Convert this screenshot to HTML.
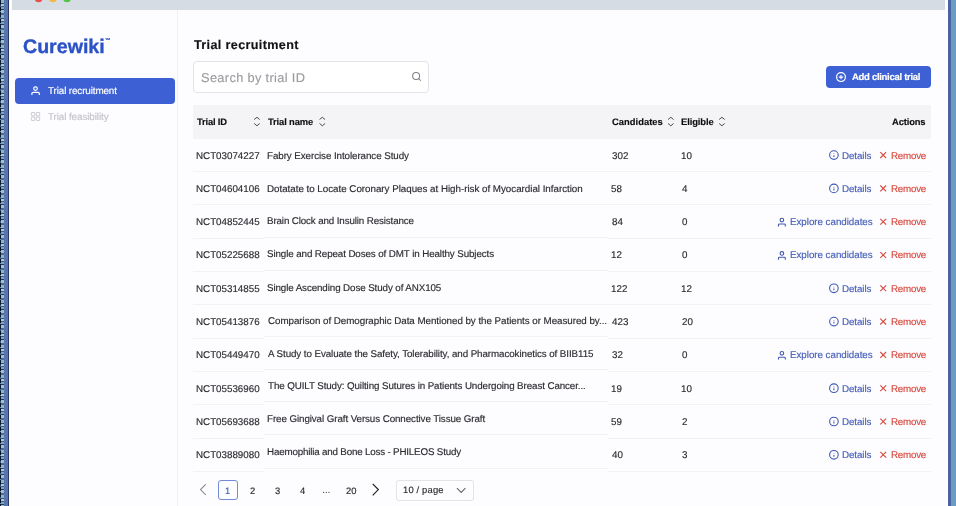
<!DOCTYPE html>
<html><head><meta charset="utf-8"><style>
html,body{margin:0;padding:0;width:956px;height:506px;overflow:hidden;background:#fff}
body{position:relative;font-family:"Liberation Sans",sans-serif}
.a{position:absolute}
.t{position:absolute;white-space:pre;-webkit-text-stroke:0.15px currentColor;line-height:1;text-rendering:geometricPrecision;will-change:transform;font-family:"Liberation Sans",sans-serif}
.bd{position:absolute;height:1px;background:#f2f1f5}
</style></head><body>
<div class="a" style="left:0;top:0;width:1px;height:506px;background:repeating-linear-gradient(180deg,#101830 0 5px,#3a5a80 5px 7px,#0a0f20 7px 11px,#6a90b0 11px 12px)"></div>
<div class="a" style="left:1px;top:0;width:3px;height:506px;background:repeating-linear-gradient(180deg,#8ab8c8 0 3px,#30507a 3px 4px,#a8d0d8 4px 6px,#40608a 6px 7px,#7aa8c0 7px 9px,#203a68 9px 10px,#9ac4d0 10px 13px,#4a6a98 13px 15px)"></div>
<div class="a" style="left:4px;top:0;width:4px;height:506px;background:#5a74ad"></div>
<div class="a" style="left:8px;top:0;width:1px;height:506px;background:#2a3868"></div>
<div class="a" style="left:9px;top:0;width:939px;height:506px;background:#fdfcfe"></div>
<div class="a" style="left:12px;top:0;width:933px;height:10px;background:#d6dce4"></div>
<div class="a" style="left:948px;top:0;width:3px;height:506px;background:#4a63a2"></div>
<div class="a" style="left:951px;top:0;width:5px;height:506px;background:#6b9cc2"></div>
<div class="a" style="left:177px;top:10px;width:1px;height:496px;background:#f1f0f4"></div>
<div class="a" style="left:15px;top:77.5px;width:160.4px;height:26.1px;background:#3d60d4;border-radius:4px"></div>
<div class="a" style="left:193.2px;top:61.3px;width:233.5px;height:30px;border:1px solid #e3e3e8;border-radius:4px;background:#fff"></div>
<div class="a" style="left:825.7px;top:66.3px;width:105.1px;height:21.6px;background:#3d60d4;border-radius:4px"></div>
<div class="a" style="left:192.5px;top:105px;width:738.4px;height:33.6px;background:#f4f3f6"></div>
<div class="bd" style="left:192.5px;width:71.5px;top:171.00px"></div><div class="bd" style="left:264px;width:343.6px;top:171.00px"></div><div class="bd" style="left:607.6px;width:323.3px;top:171.00px"></div><div class="bd" style="left:192.5px;width:71.5px;top:204.35px"></div><div class="bd" style="left:264px;width:343.6px;top:203.65px"></div><div class="bd" style="left:607.6px;width:323.3px;top:204.35px"></div><div class="bd" style="left:192.5px;width:71.5px;top:237.70px"></div><div class="bd" style="left:264px;width:343.6px;top:237.00px"></div><div class="bd" style="left:607.6px;width:323.3px;top:237.70px"></div><div class="bd" style="left:192.5px;width:71.5px;top:271.05px"></div><div class="bd" style="left:264px;width:343.6px;top:270.25px"></div><div class="bd" style="left:607.6px;width:323.3px;top:271.05px"></div><div class="bd" style="left:192.5px;width:71.5px;top:304.40px"></div><div class="bd" style="left:264px;width:343.6px;top:303.80px"></div><div class="bd" style="left:607.6px;width:323.3px;top:304.40px"></div><div class="bd" style="left:192.5px;width:71.5px;top:337.75px"></div><div class="bd" style="left:264px;width:343.6px;top:336.45px"></div><div class="bd" style="left:607.6px;width:323.3px;top:337.75px"></div><div class="bd" style="left:192.5px;width:71.5px;top:371.10px"></div><div class="bd" style="left:264px;width:343.6px;top:368.70px"></div><div class="bd" style="left:607.6px;width:323.3px;top:371.10px"></div><div class="bd" style="left:192.5px;width:71.5px;top:404.45px"></div><div class="bd" style="left:264px;width:343.6px;top:401.35px"></div><div class="bd" style="left:607.6px;width:323.3px;top:404.45px"></div><div class="bd" style="left:192.5px;width:71.5px;top:437.80px"></div><div class="bd" style="left:264px;width:343.6px;top:434.20px"></div><div class="bd" style="left:607.6px;width:323.3px;top:437.80px"></div><div class="bd" style="left:192.5px;width:71.5px;top:471.15px"></div><div class="bd" style="left:264px;width:343.6px;top:467.95px"></div><div class="bd" style="left:607.6px;width:323.3px;top:471.15px"></div>
<div class="a" style="left:218px;top:480px;width:17.6px;height:18px;border:1px solid #7089d8;border-radius:3px"></div>
<div class="a" style="left:396.4px;top:480px;width:75.2px;height:19px;border:1px solid #e3e3e8;border-radius:3px"></div>
<svg class="a" style="left:0;top:0" width="956" height="506" viewBox="0 0 956 506"><circle cx="38.6" cy="-1.8" r="4" fill="#ea4c4a"/><circle cx="52.9" cy="-1.8" r="4" fill="#f4b63d"/><circle cx="67.0" cy="-1.8" r="4" fill="#50c444"/><circle cx="35.5" cy="88.6" r="1.8" fill="none" stroke="#fff" stroke-width="1.2"/><path d="M31.9 95 V93.4 Q31.9 92.4 32.9 92.4 H38.3 Q39.3 92.4 39.3 93.4 V95" fill="none" stroke="#fff" stroke-width="1.2"/><rect x="31.4" y="112.5" width="3.4" height="3.4" rx="0.5" fill="none" stroke="#c6c6cc" stroke-width="0.9"/><rect x="36.3" y="112.5" width="3.4" height="3.4" rx="0.5" fill="none" stroke="#c6c6cc" stroke-width="0.9"/><rect x="31.4" y="117.10000000000001" width="3.4" height="3.4" rx="0.5" fill="none" stroke="#c6c6cc" stroke-width="0.9"/><rect x="36.3" y="117.10000000000001" width="3.4" height="3.4" rx="0.5" fill="none" stroke="#c6c6cc" stroke-width="0.9"/><circle cx="416.1" cy="76" r="3.5" fill="none" stroke="#808086" stroke-width="1.05"/><path d="M418.7 78.6 L420.6 80.5" stroke="#808086" stroke-width="1.05" stroke-linecap="round"/><circle cx="841" cy="77.1" r="4.4" fill="none" stroke="#fff" stroke-width="1.2"/><path d="M841 74.9 V79.3 M838.8 77.1 H843.2" stroke="#fff" stroke-width="1.1"/><path d="M254.2 119.5 L256.95 117.3 L259.7 119.5 M254.2 123.5 L256.95 125.8 L259.7 123.5" fill="none" stroke="#4a4a50" stroke-width="1"/><path d="M319.55 119.5 L322.3 117.3 L325.05 119.5 M319.55 123.5 L322.3 125.8 L325.05 123.5" fill="none" stroke="#4a4a50" stroke-width="1"/><path d="M668.05 119.5 L670.8 117.3 L673.55 119.5 M668.05 123.5 L670.8 125.8 L673.55 123.5" fill="none" stroke="#4a4a50" stroke-width="1"/><path d="M719.15 119.5 L721.9 117.3 L724.65 119.5 M719.15 123.5 L721.9 125.8 L724.65 123.5" fill="none" stroke="#4a4a50" stroke-width="1"/><circle cx="833.9" cy="155.10" r="4.3" fill="none" stroke="#4159b2" stroke-width="1.1"/><path d="M833.9 153.50 V154.10 M833.9 155.20 V157.10" stroke="#4159b2" stroke-width="1.1"/><path d="M880.3 152.20 L886.1 158.00 M886.1 152.20 L880.3 158.00" stroke="#d64a40" stroke-width="1.1"/><circle cx="833.9" cy="188.40" r="4.3" fill="none" stroke="#4159b2" stroke-width="1.1"/><path d="M833.9 186.80 V187.40 M833.9 188.50 V190.40" stroke="#4159b2" stroke-width="1.1"/><path d="M880.3 185.50 L886.1 191.30 M886.1 185.50 L880.3 191.30" stroke="#d64a40" stroke-width="1.1"/><circle cx="781.9" cy="220.10" r="1.8" fill="none" stroke="#4159b2" stroke-width="1.1"/><path d="M778.5 226.40 V224.80 Q778.5 224.00 779.5 224.00 H784.3 Q785.3 224.00 785.3 224.80 V226.40" fill="none" stroke="#4159b2" stroke-width="1.1"/><path d="M880.3 218.80 L886.1 224.60 M886.1 218.80 L880.3 224.60" stroke="#d64a40" stroke-width="1.1"/><circle cx="781.9" cy="253.40" r="1.8" fill="none" stroke="#4159b2" stroke-width="1.1"/><path d="M778.5 259.70 V258.10 Q778.5 257.30 779.5 257.30 H784.3 Q785.3 257.30 785.3 258.10 V259.70" fill="none" stroke="#4159b2" stroke-width="1.1"/><path d="M880.3 252.10 L886.1 257.90 M886.1 252.10 L880.3 257.90" stroke="#d64a40" stroke-width="1.1"/><circle cx="833.9" cy="288.30" r="4.3" fill="none" stroke="#4159b2" stroke-width="1.1"/><path d="M833.9 286.70 V287.30 M833.9 288.40 V290.30" stroke="#4159b2" stroke-width="1.1"/><path d="M880.3 285.40 L886.1 291.20 M886.1 285.40 L880.3 291.20" stroke="#d64a40" stroke-width="1.1"/><circle cx="833.9" cy="321.60" r="4.3" fill="none" stroke="#4159b2" stroke-width="1.1"/><path d="M833.9 320.00 V320.60 M833.9 321.70 V323.60" stroke="#4159b2" stroke-width="1.1"/><path d="M880.3 318.70 L886.1 324.50 M886.1 318.70 L880.3 324.50" stroke="#d64a40" stroke-width="1.1"/><circle cx="781.9" cy="353.30" r="1.8" fill="none" stroke="#4159b2" stroke-width="1.1"/><path d="M778.5 359.60 V358.00 Q778.5 357.20 779.5 357.20 H784.3 Q785.3 357.20 785.3 358.00 V359.60" fill="none" stroke="#4159b2" stroke-width="1.1"/><path d="M880.3 352.00 L886.1 357.80 M886.1 352.00 L880.3 357.80" stroke="#d64a40" stroke-width="1.1"/><circle cx="833.9" cy="388.20" r="4.3" fill="none" stroke="#4159b2" stroke-width="1.1"/><path d="M833.9 386.60 V387.20 M833.9 388.30 V390.20" stroke="#4159b2" stroke-width="1.1"/><path d="M880.3 385.30 L886.1 391.10 M886.1 385.30 L880.3 391.10" stroke="#d64a40" stroke-width="1.1"/><circle cx="833.9" cy="421.50" r="4.3" fill="none" stroke="#4159b2" stroke-width="1.1"/><path d="M833.9 419.90 V420.50 M833.9 421.60 V423.50" stroke="#4159b2" stroke-width="1.1"/><path d="M880.3 418.60 L886.1 424.40 M886.1 418.60 L880.3 424.40" stroke="#d64a40" stroke-width="1.1"/><circle cx="833.9" cy="454.80" r="4.3" fill="none" stroke="#4159b2" stroke-width="1.1"/><path d="M833.9 453.20 V453.80 M833.9 454.90 V456.80" stroke="#4159b2" stroke-width="1.1"/><path d="M880.3 451.90 L886.1 457.70 M886.1 451.90 L880.3 457.70" stroke="#d64a40" stroke-width="1.1"/><path d="M205.7 484.3 L200.5 489.6 L205.7 494.8" fill="none" stroke="#8a8a90" stroke-width="1.1"/><path d="M372.7 483.8 L378.3 489.6 L372.7 495.3" fill="none" stroke="#222" stroke-width="1.2"/><path d="M456.9 488.2 L461.2 492.4 L465.4 488.2" fill="none" stroke="#666" stroke-width="1.1"/><circle cx="323.6" cy="492.3" r="0.6" fill="#2b2b30"/><circle cx="326.3" cy="492.3" r="0.6" fill="#2b2b30"/><circle cx="329.0" cy="492.3" r="0.6" fill="#2b2b30"/></svg>
<div class="t" style="left:23.30px;top:37.90px;font-size:19.6px;font-weight:700;letter-spacing:0.0px;color:#2b52c6;-webkit-text-stroke:0.35px #2b52c6;">Curewiki</div><div class="t" style="left:48.00px;top:86.80px;font-size:9.9px;font-weight:400;letter-spacing:-0.125px;color:#ffffff;">Trial recruitment</div><div class="t" style="left:48.00px;top:113.00px;font-size:9.9px;font-weight:400;letter-spacing:-0.1px;color:#c4c4ca;">Trial feasibility</div><div class="t" style="left:194.30px;top:39.40px;font-size:12.6px;font-weight:700;letter-spacing:0.356px;color:#121214;">Trial recruitment</div><div class="t" style="left:200.60px;top:72.00px;font-size:12.8px;font-weight:400;letter-spacing:0.341px;color:#9c9ca1;">Search by trial ID</div><div class="t" style="left:852.30px;top:73.40px;font-size:9.5px;font-weight:700;letter-spacing:-0.294px;color:#ffffff;">Add clinical trial</div><div class="t" style="left:196.70px;top:117.40px;font-size:9.4px;font-weight:700;letter-spacing:-0.171px;color:#0e0e10;">Trial ID</div><div class="t" style="left:268.20px;top:117.40px;font-size:9.4px;font-weight:700;letter-spacing:-0.133px;color:#0e0e10;">Trial name</div><div class="t" style="left:611.70px;top:117.40px;font-size:9.4px;font-weight:700;letter-spacing:0.022px;color:#0e0e10;">Candidates</div><div class="t" style="left:680.60px;top:117.40px;font-size:9.4px;font-weight:700;letter-spacing:-0.086px;color:#0e0e10;">Eligible</div><div class="t" style="left:891.80px;top:117.40px;font-size:9.4px;font-weight:700;letter-spacing:-0.133px;color:#0e0e10;">Actions</div><div class="t" style="left:195.70px;top:151.50px;font-size:9.8px;font-weight:400;letter-spacing:-0.01px;color:#2b2b30;">NCT03074227</div><div class="t" style="left:266.80px;top:151.50px;font-size:9.8px;font-weight:400;letter-spacing:-0.077px;color:#2b2b30;">Fabry Exercise Intolerance Study</div><div class="t" style="left:611.70px;top:151.50px;font-size:9.8px;font-weight:400;letter-spacing:0px;color:#2b2b30;">302</div><div class="t" style="left:680.60px;top:151.50px;font-size:9.8px;font-weight:400;letter-spacing:0px;color:#2b2b30;">10</div><div class="t" style="left:841.50px;top:151.50px;font-size:9.8px;font-weight:400;letter-spacing:-0.083px;color:#4660b8;">Details</div><div class="t" style="left:890.60px;top:151.50px;font-size:9.8px;font-weight:400;letter-spacing:-0.24px;color:#d64a40;">Remove</div><div class="t" style="left:195.70px;top:184.80px;font-size:9.8px;font-weight:400;letter-spacing:-0.01px;color:#2b2b30;">NCT04604106</div><div class="t" style="left:266.80px;top:184.80px;font-size:9.8px;font-weight:400;letter-spacing:-0.024px;color:#2b2b30;">Dotatate to Locate Coronary Plaques at High-risk of Myocardial Infarction</div><div class="t" style="left:610.70px;top:184.80px;font-size:9.8px;font-weight:400;letter-spacing:0px;color:#2b2b30;">58</div><div class="t" style="left:681.60px;top:184.80px;font-size:9.8px;font-weight:400;letter-spacing:0px;color:#2b2b30;">4</div><div class="t" style="left:841.50px;top:184.80px;font-size:9.8px;font-weight:400;letter-spacing:-0.083px;color:#4660b8;">Details</div><div class="t" style="left:890.60px;top:184.80px;font-size:9.8px;font-weight:400;letter-spacing:-0.24px;color:#d64a40;">Remove</div><div class="t" style="left:195.70px;top:218.10px;font-size:9.8px;font-weight:400;letter-spacing:-0.01px;color:#2b2b30;">NCT04852445</div><div class="t" style="left:266.80px;top:217.10px;font-size:9.8px;font-weight:400;letter-spacing:-0.133px;color:#2b2b30;">Brain Clock and Insulin Resistance</div><div class="t" style="left:611.70px;top:218.10px;font-size:9.8px;font-weight:400;letter-spacing:0px;color:#2b2b30;">84</div><div class="t" style="left:681.60px;top:218.10px;font-size:9.8px;font-weight:400;letter-spacing:0px;color:#2b2b30;">0</div><div class="t" style="left:789.70px;top:218.10px;font-size:9.8px;font-weight:400;letter-spacing:-0.041px;color:#4660b8;">Explore candidates</div><div class="t" style="left:890.60px;top:218.10px;font-size:9.8px;font-weight:400;letter-spacing:-0.24px;color:#d64a40;">Remove</div><div class="t" style="left:195.70px;top:251.40px;font-size:9.8px;font-weight:400;letter-spacing:-0.01px;color:#2b2b30;">NCT05225688</div><div class="t" style="left:266.80px;top:250.40px;font-size:9.8px;font-weight:400;letter-spacing:-0.108px;color:#2b2b30;">Single and Repeat Doses of DMT in Healthy Subjects</div><div class="t" style="left:610.70px;top:251.40px;font-size:9.8px;font-weight:400;letter-spacing:0px;color:#2b2b30;">12</div><div class="t" style="left:681.60px;top:251.40px;font-size:9.8px;font-weight:400;letter-spacing:0px;color:#2b2b30;">0</div><div class="t" style="left:789.70px;top:251.40px;font-size:9.8px;font-weight:400;letter-spacing:-0.041px;color:#4660b8;">Explore candidates</div><div class="t" style="left:890.60px;top:251.40px;font-size:9.8px;font-weight:400;letter-spacing:-0.24px;color:#d64a40;">Remove</div><div class="t" style="left:195.70px;top:284.70px;font-size:9.8px;font-weight:400;letter-spacing:-0.01px;color:#2b2b30;">NCT05314855</div><div class="t" style="left:266.80px;top:283.70px;font-size:9.8px;font-weight:400;letter-spacing:-0.106px;color:#2b2b30;">Single Ascending Dose Study of ANX105</div><div class="t" style="left:610.70px;top:284.70px;font-size:9.8px;font-weight:400;letter-spacing:0px;color:#2b2b30;">122</div><div class="t" style="left:680.60px;top:284.70px;font-size:9.8px;font-weight:400;letter-spacing:0px;color:#2b2b30;">12</div><div class="t" style="left:841.50px;top:284.70px;font-size:9.8px;font-weight:400;letter-spacing:-0.083px;color:#4660b8;">Details</div><div class="t" style="left:890.60px;top:284.70px;font-size:9.8px;font-weight:400;letter-spacing:-0.24px;color:#d64a40;">Remove</div><div class="t" style="left:195.70px;top:318.00px;font-size:9.8px;font-weight:400;letter-spacing:-0.01px;color:#2b2b30;">NCT05413876</div><div class="t" style="left:267.80px;top:317.00px;font-size:9.8px;font-weight:400;letter-spacing:-0.045px;color:#2b2b30;">Comparison of Demographic Data Mentioned by the Patients or Measured by...</div><div class="t" style="left:611.70px;top:318.00px;font-size:9.8px;font-weight:400;letter-spacing:0px;color:#2b2b30;">423</div><div class="t" style="left:681.60px;top:318.00px;font-size:9.8px;font-weight:400;letter-spacing:0px;color:#2b2b30;">20</div><div class="t" style="left:841.50px;top:318.00px;font-size:9.8px;font-weight:400;letter-spacing:-0.083px;color:#4660b8;">Details</div><div class="t" style="left:890.60px;top:318.00px;font-size:9.8px;font-weight:400;letter-spacing:-0.24px;color:#d64a40;">Remove</div><div class="t" style="left:195.70px;top:351.30px;font-size:9.8px;font-weight:400;letter-spacing:-0.01px;color:#2b2b30;">NCT05449470</div><div class="t" style="left:267.80px;top:349.70px;font-size:9.8px;font-weight:400;letter-spacing:-0.086px;color:#2b2b30;">A Study to Evaluate the Safety, Tolerability, and Pharmacokinetics of BIIB115</div><div class="t" style="left:611.70px;top:351.30px;font-size:9.8px;font-weight:400;letter-spacing:0px;color:#2b2b30;">32</div><div class="t" style="left:681.60px;top:351.30px;font-size:9.8px;font-weight:400;letter-spacing:0px;color:#2b2b30;">0</div><div class="t" style="left:789.70px;top:351.30px;font-size:9.8px;font-weight:400;letter-spacing:-0.041px;color:#4660b8;">Explore candidates</div><div class="t" style="left:890.60px;top:351.30px;font-size:9.8px;font-weight:400;letter-spacing:-0.24px;color:#d64a40;">Remove</div><div class="t" style="left:195.70px;top:384.60px;font-size:9.8px;font-weight:400;letter-spacing:-0.01px;color:#2b2b30;">NCT05536960</div><div class="t" style="left:267.80px;top:381.60px;font-size:9.8px;font-weight:400;letter-spacing:-0.104px;color:#2b2b30;">The QUILT Study: Quilting Sutures in Patients Undergoing Breast Cancer...</div><div class="t" style="left:610.70px;top:384.60px;font-size:9.8px;font-weight:400;letter-spacing:0px;color:#2b2b30;">19</div><div class="t" style="left:680.60px;top:384.60px;font-size:9.8px;font-weight:400;letter-spacing:0px;color:#2b2b30;">10</div><div class="t" style="left:841.50px;top:384.60px;font-size:9.8px;font-weight:400;letter-spacing:-0.083px;color:#4660b8;">Details</div><div class="t" style="left:890.60px;top:384.60px;font-size:9.8px;font-weight:400;letter-spacing:-0.24px;color:#d64a40;">Remove</div><div class="t" style="left:195.70px;top:417.90px;font-size:9.8px;font-weight:400;letter-spacing:-0.01px;color:#2b2b30;">NCT05693688</div><div class="t" style="left:266.80px;top:414.90px;font-size:9.8px;font-weight:400;letter-spacing:-0.092px;color:#2b2b30;">Free Gingival Graft Versus Connective Tissue Graft</div><div class="t" style="left:610.70px;top:417.90px;font-size:9.8px;font-weight:400;letter-spacing:0px;color:#2b2b30;">59</div><div class="t" style="left:681.60px;top:417.90px;font-size:9.8px;font-weight:400;letter-spacing:0px;color:#2b2b30;">2</div><div class="t" style="left:841.50px;top:417.90px;font-size:9.8px;font-weight:400;letter-spacing:-0.083px;color:#4660b8;">Details</div><div class="t" style="left:890.60px;top:417.90px;font-size:9.8px;font-weight:400;letter-spacing:-0.24px;color:#d64a40;">Remove</div><div class="t" style="left:195.70px;top:451.20px;font-size:9.8px;font-weight:400;letter-spacing:-0.01px;color:#2b2b30;">NCT03889080</div><div class="t" style="left:266.80px;top:448.20px;font-size:9.8px;font-weight:400;letter-spacing:-0.185px;color:#2b2b30;">Haemophilia and Bone Loss - PHILEOS Study</div><div class="t" style="left:611.70px;top:451.20px;font-size:9.8px;font-weight:400;letter-spacing:0px;color:#2b2b30;">40</div><div class="t" style="left:681.60px;top:451.20px;font-size:9.8px;font-weight:400;letter-spacing:0px;color:#2b2b30;">3</div><div class="t" style="left:841.50px;top:451.20px;font-size:9.8px;font-weight:400;letter-spacing:-0.083px;color:#4660b8;">Details</div><div class="t" style="left:890.60px;top:451.20px;font-size:9.8px;font-weight:400;letter-spacing:-0.24px;color:#d64a40;">Remove</div><div class="t" style="left:224.60px;top:485.90px;font-size:9.4px;font-weight:400;letter-spacing:0px;color:#3e5cb8;">1</div><div class="t" style="left:250.10px;top:485.90px;font-size:9.4px;font-weight:400;letter-spacing:0px;color:#2b2b30;">2</div><div class="t" style="left:274.50px;top:485.90px;font-size:9.4px;font-weight:400;letter-spacing:0px;color:#2b2b30;">3</div><div class="t" style="left:299.50px;top:485.90px;font-size:9.4px;font-weight:400;letter-spacing:0px;color:#2b2b30;">4</div><div class="t" style="left:345.70px;top:485.90px;font-size:9.4px;font-weight:400;letter-spacing:0px;color:#2b2b30;">20</div><div class="t" style="left:403.00px;top:485.40px;font-size:9.4px;font-weight:400;letter-spacing:0.175px;color:#2b2b30;">10 / page</div>
<div class="t" style="left:104.6px;top:39.2px;font-size:5.6px;font-weight:700;color:#2d52c4">™</div>
</body></html>
